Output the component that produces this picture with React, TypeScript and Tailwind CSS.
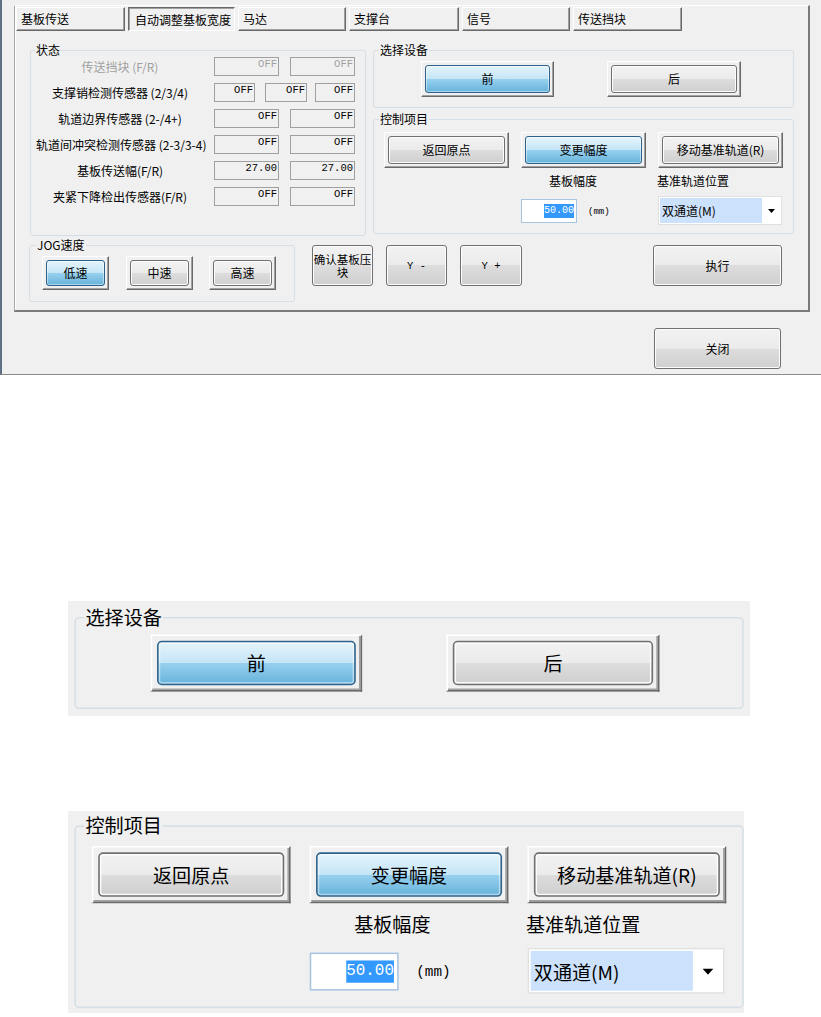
import React from "react";

const GRAY_BTN =
  "border-[#707070] bg-[linear-gradient(180deg,#f2f2f2_0%,#ebebeb_50%,#dddddd_50%,#cfcfcf_100%)] shadow-[inset_0_0_0_1px_#fcfcfc]";
const BLUE_BTN =
  "border-[#2c628b] bg-[linear-gradient(180deg,#e5f4fc_0%,#c4e5f6_50%,#98d1ef_50%,#68b3db_100%)] shadow-[inset_0_0_0_1px_rgba(255,255,255,0.45)]";

function Btn({
  blue = false,
  className = "",
  children,
}: {
  blue?: boolean;
  className?: string;
  children: React.ReactNode;
}) {
  return (
    <div
      className={`flex items-center justify-center rounded-[3px] border text-[12px] leading-[14px] whitespace-nowrap ${
        blue ? BLUE_BTN : GRAY_BTN
      } ${className}`}
    >
      {children}
    </div>
  );
}

function FramedBtn({
  blue = false,
  className = "",
  children,
}: {
  blue?: boolean;
  className?: string;
  children: React.ReactNode;
}) {
  return (
    <div
      className={`flex p-[3px] border border-t-white border-l-white border-r-[#696969] border-b-[#696969] shadow-[inset_-1px_-1px_0_#a0a0a0] ${className}`}
    >
      <Btn blue={blue} className="flex-1">
        {children}
      </Btn>
    </div>
  );
}

function Group({
  label,
  legendClass,
  className = "",
  children,
}: {
  label: string;
  legendClass: string;
  className?: string;
  children?: React.ReactNode;
}) {
  return (
    <fieldset className={`border border-[#d5dfe5] rounded-[3px] ${className}`}>
      <legend className={`${legendClass} px-[1px] text-[12px] leading-[14px] whitespace-nowrap`}>{label}</legend>
      {children}
    </fieldset>
  );
}

function Tab({ label, selected = false, className = "" }: { label: string; selected?: boolean; className?: string }) {
  return (
    <div
      className={`h-[24px] flex items-center text-[12px] leading-[14px] whitespace-nowrap ${
        selected
          ? "pl-[6px] pt-[1px] border border-t-[#696969] border-l-[#696969] border-r-white border-b-white shadow-[inset_1px_1px_0_#a0a0a0]"
          : "pl-[4px] border border-t-white border-l-white border-r-[#696969] border-b-[#696969] shadow-[inset_-1px_-1px_0_#a0a0a0]"
      } ${className}`}
    >
      {label}
    </div>
  );
}

function Val({ v, className = "", dim = false }: { v: string; className?: string; dim?: boolean }) {
  return (
    <div
      className={`h-[19px] border border-[#a0a0a0] text-right pr-[1px] font-['Liberation_Mono',monospace] text-[10.5px] leading-[12px] ${
        dim ? "text-[#a0a0a0]" : "text-black"
      } ${className}`}
    >
      {v}
    </div>
  );
}

const ROWS: { label: string; vals: string[]; dim?: boolean }[] = [
  { label: "传送挡块 (F/R)", vals: ["OFF", "OFF"], dim: true },
  { label: "支撑销检测传感器 (2/3/4)", vals: ["OFF", "OFF", "OFF"] },
  { label: "轨道边界传感器 (2-/4+)", vals: ["OFF", "OFF"] },
  { label: "轨道间冲突检测传感器 (2-3/3-4)", vals: ["OFF", "OFF"] },
  { label: "基板传送幅(F/R)", vals: ["27.00", "27.00"] },
  { label: "夹紧下降检出传感器(F/R)", vals: ["OFF", "OFF"] },
];

function StatusGroup() {
  return (
    <Group label="状态" legendClass="ml-[4px]" className="w-[336px] h-[193px]">
      <div className="flex flex-col gap-[7px] pl-[5px]">
        {ROWS.map((r) => (
          <div key={r.label} className="flex items-center h-[19px]">
            <div
              className={`w-[168px] text-center text-[12px] leading-[14px] whitespace-nowrap ${
                r.dim ? "text-[#a0a0a0]" : "text-black"
              }`}
            >
              {r.label}
            </div>
            {r.vals.length === 2 ? (
              <div className="flex ml-[10px]">
                <Val v={r.vals[0]} dim={r.dim} className="w-[65px]" />
                <Val v={r.vals[1]} dim={r.dim} className="w-[65px] ml-[11px]" />
              </div>
            ) : (
              <div className="flex ml-[10px]">
                <Val v={r.vals[0]} className="w-[41px]" />
                <Val v={r.vals[1]} className="w-[42px] ml-[10px]" />
                <Val v={r.vals[2]} className="w-[40px] ml-[8px]" />
              </div>
            )}
          </div>
        ))}
      </div>
    </Group>
  );
}

function SelectDeviceGroup() {
  return (
    <Group label="选择设备" legendClass="ml-[5px]" className="w-[421px] h-[65px]">
      <div className="flex mt-[4px] pl-[47px]">
        <FramedBtn blue className="w-[133px] h-[36px]">
          前
        </FramedBtn>
        <FramedBtn className="ml-[53px] w-[134px] h-[36px]">后</FramedBtn>
      </div>
    </Group>
  );
}

function ControlGroup() {
  return (
    <Group label="控制项目" legendClass="ml-[5px]" className="w-[421px] h-[122px]">
      <div className="flex mt-[6px] pl-[10px]">
        <FramedBtn className="w-[125px] h-[36px]">返回原点</FramedBtn>
        <FramedBtn blue className="ml-[12px] w-[125px] h-[36px]">
          变更幅度
        </FramedBtn>
        <FramedBtn className="ml-[12px] w-[125px] h-[36px]">移动基准轨道(R)</FramedBtn>
      </div>
      <div className="flex mt-[6px] h-[14px] text-[12px] leading-[14px]">
        <span className="ml-[175px] w-[48px] whitespace-nowrap">基板幅度</span>
        <span className="ml-[60px] whitespace-nowrap">基准轨道位置</span>
      </div>
      <div className="flex items-center mt-[8px]">
        <div className="ml-[147px] w-[56px] h-[24px] border border-[#a9c4e0] bg-white flex items-center justify-end pr-[2px]">
          <span className="bg-[#3399ff] text-white font-['Liberation_Mono',monospace] text-[10px] leading-[14px]">
            50.00
          </span>
        </div>
        <span className="ml-[11px] w-[20px] mt-[2px] font-['Liberation_Mono',monospace] text-[9px] leading-[12px] whitespace-nowrap">
          (mm)
        </span>
        <div className="ml-[50px] w-[124px] h-[29px] border border-[#e0e0e0] bg-white flex p-[1px]">
          <div className="w-[102px] bg-[#cce1fb] flex items-center pl-[2px] text-[12px] leading-[14px] whitespace-nowrap">
            双通道(M)
          </div>
          <div className="flex-1 flex items-center justify-center">
            <svg width="7" height="4" viewBox="0 0 7 4">
              <polygon points="0,0 7,0 3.5,4" fill="#000" />
            </svg>
          </div>
        </div>
      </div>
    </Group>
  );
}

function JogGroup() {
  return (
    <Group label="JOG速度" legendClass="ml-[6px]" className="w-[266px] h-[64px]">
      <div className="flex mt-[4px] pl-[12px]">
        <FramedBtn blue className="w-[67px] h-[34px]">
          低速
        </FramedBtn>
        <FramedBtn className="ml-[17px] w-[67px] h-[34px]">中速</FramedBtn>
        <FramedBtn className="ml-[16px] w-[67px] h-[34px]">高速</FramedBtn>
      </div>
    </Group>
  );
}

export default function App() {
  return (
    <div className="w-[821px] min-h-[1017px] bg-white text-black font-['Noto_Sans_CJK_SC','Noto_Sans_CJK_JP',sans-serif] flex flex-col">
      {/* Dialog */}
      <div className="w-[821px] h-[375px] bg-[#f0f0f0] border-l-2 border-l-[#5f6f84] border-b border-b-[#8a8a8a] flex flex-col">
        <div className="ml-[12px] mt-[5px] w-[796px] h-[307px] border-t border-l border-r-2 border-b-2 border-t-white border-l-[#a8a8a8] border-r-[#7a7a7a] border-b-[#7a7a7a] shadow-[inset_1px_0_0_#fff] flex flex-col">
          {/* Tabs */}
          <div className="flex mt-[1px] ml-[1px] gap-[3px]">
            <Tab label="基板传送" className="w-[109px]" />
            <Tab label="自动调整基板宽度" selected className="w-[107px]" />
            <Tab label="马达" className="w-[108px]" />
            <Tab label="支撑台" className="w-[110px]" />
            <Tab label="信号" className="w-[108px]" />
            <Tab label="传送挡块" className="w-[109px]" />
          </div>
          {/* Upper row */}
          <div className="flex items-start mt-[12px] ml-[15px]">
            <StatusGroup />
            <div className="ml-[7px] flex flex-col">
              <SelectDeviceGroup />
              <div className="mt-[4px]">
                <ControlGroup />
              </div>
            </div>
          </div>
          {/* Lower row */}
          <div className="flex items-start mt-[2px] ml-[14px]">
            <JogGroup />
            <Btn className="ml-[17px] mt-[7px] w-[61px] h-[41px]">
              <div className="flex flex-col items-center text-[11.5px] leading-[13px] whitespace-nowrap">
                <span>确认基板压</span>
                <span>块</span>
              </div>
            </Btn>
            <Btn className="ml-[13px] mt-[7px] w-[61px] h-[41px]">
              <span className="font-['Liberation_Mono',monospace] text-[10.5px] whitespace-pre">Y -</span>
            </Btn>
            <Btn className="ml-[13px] mt-[7px] w-[62px] h-[41px]">
              <span className="font-['Liberation_Mono',monospace] text-[10.5px] whitespace-pre">Y +</span>
            </Btn>
            <Btn className="ml-[131px] mt-[7px] w-[129px] h-[41px]">执行</Btn>
          </div>
        </div>
        <Btn className="ml-[652px] mt-[16px] w-[127px] h-[41px]">关闭</Btn>
      </div>

      {/* Enlarged crop: 选择设备 */}
      <div className="ml-[68px] mt-[226px] w-[682px] h-[115px] overflow-hidden bg-[#f0f0f0]">
        <div className="origin-top-left scale-[1.59] w-[429px] h-[72px] pl-[4px] pt-[3px]">
          <SelectDeviceGroup />
        </div>
      </div>

      {/* Enlarged crop: 控制项目 */}
      <div className="ml-[68px] mt-[95px] w-[676px] h-[202px] overflow-hidden bg-[#f0f0f0]">
        <div className="origin-top-left scale-[1.59] w-[425px] h-[127px] pl-[4px] pt-[2px]">
          <ControlGroup />
        </div>
      </div>
    </div>
  );
}
